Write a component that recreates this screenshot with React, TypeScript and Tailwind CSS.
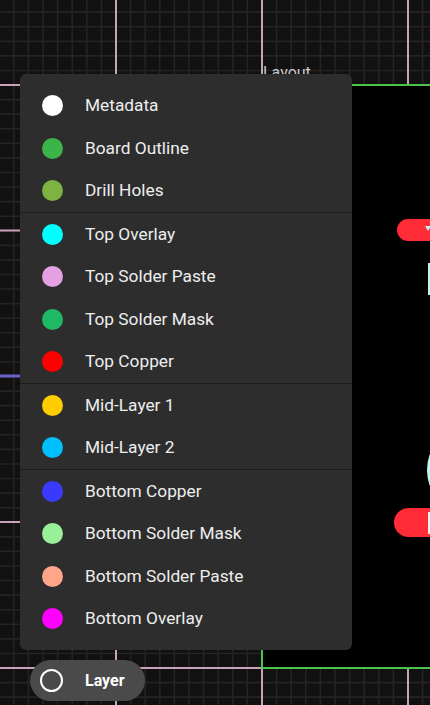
const groups = [
  [
    { name: "Metadata", color: "#ffffff" },
    { name: "Board Outline", color: "#3bb54a" },
    { name: "Drill Holes", color: "#7cb342" },
  ],
  [
    { name: "Top Overlay", color: "#00ffff" },
    { name: "Top Solder Paste", color: "#e3a0e3" },
    { name: "Top Solder Mask", color: "#1fb864" },
    { name: "Top Copper", color: "#ff0000" },
  ],
  [
    { name: "Mid-Layer 1", color: "#ffcc00" },
    { name: "Mid-Layer 2", color: "#00bfff" },
  ],
  [
    { name: "Bottom Copper", color: "#3a3aff" },
    { name: "Bottom Solder Mask", color: "#98f198" },
    { name: "Bottom Solder Paste", color: "#ffa58a" },
    { name: "Bottom Overlay", color: "#ff00ff" },
  ],
];

function Canvas() {
  const minor = [];
  for (let i = -10; i < 60; i++) {
    const x = 116 + i * 14.6;
    const y = 85 + i * 14.575;
    minor.push(<line key={"v" + i} x1={x} y1={0} x2={x} y2={705} stroke="#272224" strokeWidth={1.6} />);
    minor.push(<line key={"h" + i} x1={0} y1={y} x2={430} y2={y} stroke="#272224" strokeWidth={1.6} />);
  }
  return (
    <svg className="absolute inset-0" width={430} height={705}>
      <rect width={430} height={705} fill="#111111" />
      {minor}
      {[116, 262, 408].map((x) => (
        <line key={x} x1={x} y1={0} x2={x} y2={705} stroke="#c9a3b9" strokeWidth={2} />
      ))}
      {[85, 230.5, 522, 668].map((y) => (
        <line key={y} x1={0} y1={y} x2={430} y2={y} stroke="#c9a3b9" strokeWidth={2} />
      ))}
      <line x1={0} y1={376} x2={430} y2={376} stroke="#6a62c8" strokeWidth={3} />
      <rect x={262} y={85} width={170} height={583} fill="#000000" stroke="#4cc44c" strokeWidth={2} />
      <rect x={397} y={219} width={50} height={22} rx={11} fill="#ff2b36" />
      <path d="M425 226 L431 226 L428 231 Z" fill="#bff4f4" />
      <rect x={394} y={508} width={50} height={29} rx={14.5} fill="#ff2b36" />
      <rect x={428} y={512} width={3} height={22} fill="#e6f4f4" />
      <rect x={428} y={263} width={3} height={32} fill="#bff4f4" />
      <path d="M431 455 Q426 470 431 485" stroke="#bff4f4" strokeWidth={3} fill="none" />
    </svg>
  );
}

export default function App() {
  return (
    <div className="relative w-[430px] h-[705px] overflow-hidden bg-[#111111] font-['Roboto',sans-serif]">
      <Canvas />
      <div className="absolute left-[263px] top-[61px] text-[16px] text-[#c8c8c8]">Layout</div>

      <div className="absolute left-[20px] top-[74px] w-[332px] rounded-md bg-[#2d2d2d] pt-[10px] pb-[10px]">
        {groups.map((g, gi) => (
          <div key={gi} className={gi > 0 ? "border-t border-[#1c1c1c]" : ""}>
            {g.map((l) => (
              <div key={l.name} className="flex h-[42.5px] items-center pl-[22px]">
                <span className="mt-[1px] h-[21px] w-[21px] rounded-full" style={{ backgroundColor: l.color }} />
                <span className="ml-[22px] mt-[2px] text-[17.3px] text-[#ededed]">{l.name}</span>
              </div>
            ))}
          </div>
        ))}
      </div>

      <div className="absolute left-[30px] top-[660px] flex h-[41px] w-[115px] items-center rounded-full bg-[#4a4a4a] pl-[10px]">
        <span className="h-[23px] w-[23px] rounded-full border-2 border-white" />
        <span className="ml-[22px] text-[16px] font-bold text-white">Layer</span>
      </div>
    </div>
  );
}
